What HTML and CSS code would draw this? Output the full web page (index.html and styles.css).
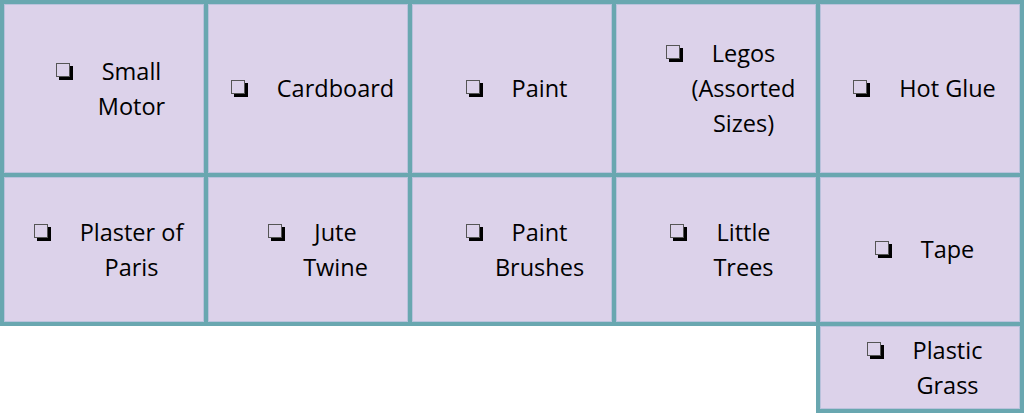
FILE: index.html
```html
<!DOCTYPE html>
<html>
<head>
<meta charset="utf-8">
<link rel="stylesheet" href="styles.css">
</head>
<body>
<div class="supplies">
  <div class="cell"><p class="item"><span class="box"></span>Small<br>Motor</p></div>
  <div class="cell"><p class="item"><span class="box"></span>Cardboard</p></div>
  <div class="cell"><p class="item"><span class="box"></span>Paint</p></div>
  <div class="cell"><p class="item"><span class="box"></span>Legos<br>(Assorted<br>Sizes)</p></div>
  <div class="cell"><p class="item"><span class="box"></span>Hot Glue</p></div>
  <div class="cell"><p class="item"><span class="box"></span>Plaster of<br>Paris</p></div>
  <div class="cell"><p class="item"><span class="box"></span>Jute<br>Twine</p></div>
  <div class="cell"><p class="item"><span class="box"></span>Paint<br>Brushes</p></div>
  <div class="cell"><p class="item"><span class="box"></span>Little<br>Trees</p></div>
  <div class="cell"><p class="item"><span class="box"></span>Tape</p></div>
  <div class="cell last"><p class="item"><span class="box"></span>Plastic<br>Grass</p></div>
</div>
</body>
</html>
```
FILE: styles.css
```css
html, body {
  margin: 0;
  padding: 0;
  background: #ffffff;
}

.supplies {
  display: grid;
  grid-template-columns: repeat(5, 200px);
  grid-template-rows: 169px 145px 83px;
  gap: 4px;
  padding: 4px;
  width: 1016px;
  font-family: "Open Sans", "DejaVu Sans", sans-serif;
  font-size: 23.5px;
  line-height: 35px;
  color: #000;
}

.cell {
  background: #dcd2ea;
  box-shadow: inset 0 0 0 1px #b9c2dc, 0 0 0 4px #69a7b0;
  display: flex;
  flex-direction: column;
  justify-content: center;
}

.cell.last {
  grid-column: 5;
}

.item {
  margin: 0;
  padding-left: 55px;
  text-align: center;
  white-space: nowrap;
}

.box {
  display: inline-block;
  box-sizing: border-box;
  width: 14px;
  height: 14px;
  border: 1px solid #555;
  background: #fff0;
  box-shadow: 3px 3px 0 #000;
  margin-left: -46px;
  margin-right: 32px;
  vertical-align: 3px;
}
```
